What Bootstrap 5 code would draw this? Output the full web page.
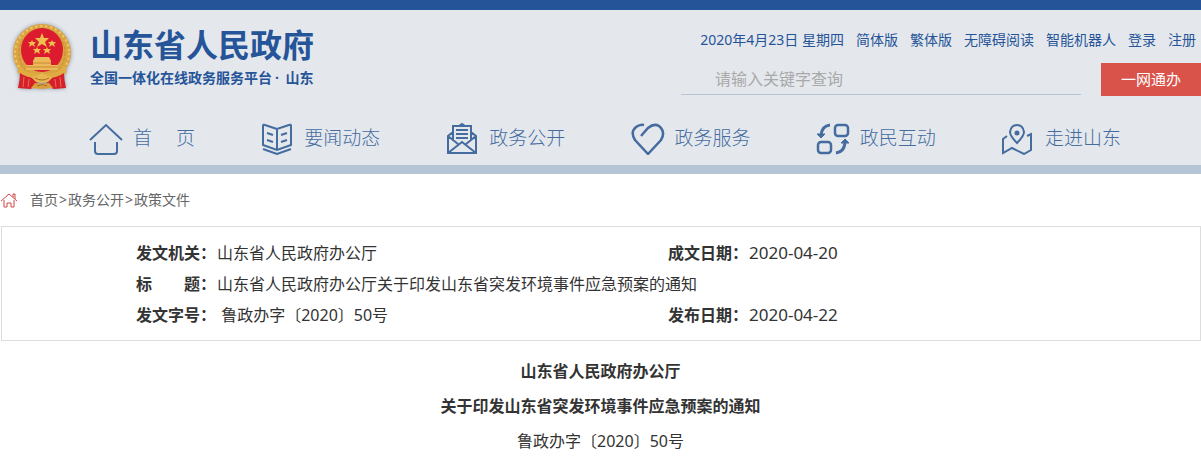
<!DOCTYPE html>
<html lang="zh-CN">
<head>
<meta charset="utf-8">
<meta name="viewport" content="width=device-width, initial-scale=1">
<title>山东省人民政府</title>
<link href="https://cdn.jsdelivr.net/npm/bootstrap@5.3.0/dist/css/bootstrap.min.css" rel="stylesheet">
<style>
body { font-family: "Noto Sans", "Noto Sans CJK SC", sans-serif; font-size: 16px; line-height: 24px; color: #333; background: #fff; }
a { color: inherit; text-decoration: none; }
.site-header { background: #e4e8ed; border-top: 10px solid #265498; border-bottom: 9px solid #b5c5d6; color: #265498; }
.emblem { width: 66px; height: 72px; flex: none; filter: drop-shadow(0 0 2px #8a93a3); }
.site-brand { padding: 10px 0 0 9px; gap: 15px; }
.site-title { font-size: 32px; line-height: 40px; font-weight: 700; margin: 5px 0 3px; }
.site-sub { font-size: 14px; line-height: 20px; font-weight: 700; }
.site-sub .dot { margin: 0 3px; }
.site-tools { width: 520px; }
.quick-links { font-size: 14px; line-height: 20px; padding: 20px 5px 0 0; gap: 12px; }
.search-row { margin-top: 13px; gap: 20px; }
.search-box { background: transparent; border: 0; border-bottom: 1px solid #b5c5d6; border-radius: 0; padding: 0 34px; height: 32px; font-size: 16px; }
.search-box:focus { background: transparent; box-shadow: none; }
.search-box::placeholder { color: #a9a9a9; }
.btn-service { background: #d9534a; color: #fff; width: 100px; height: 33px; flex: none; border: 0; border-radius: 0; font-size: 15px; line-height: 33px; padding: 0; }
.main-nav { padding: 24px 80px 9px 89px; font-size: 19px; line-height: 36px; font-weight: 300; color: #456c9f; }
.main-nav a { gap: 10px; }
.main-nav svg { width: 34px; height: 34px; fill: none; stroke: #456c9f; stroke-width: 2; }
.crumbs { font-size: 14px; line-height: 20px; color: #666; padding: 16px 0 16px 1px; gap: 13px; }
.crumbs svg { width: 16px; height: 16px; }
.crumbs .sep { margin: 0 1px; }
.doc-info { border: 1px solid #ddd; margin-left: 1px; padding: 11px 0 9px 134px; }
.doc-info td { padding: 3px 0 4px; line-height: 24px; text-align: left; }
.doc-info .doc-left { width: 50%; }
.doc-info b { margin-right: 1px; }
.doc-info time { font-size: 17px; }
.doc-head { padding-top: 13px; }
.doc-head h1, .doc-head p { font-size: 16px; line-height: 35px; margin: 0; }
.doc-head h1 { font-weight: 700; }
</style>
</head>
<body>
<header class="site-header">
  <div class="d-flex justify-content-between align-items-start">
    <a href="#" class="site-brand d-flex">
      <svg class="emblem" viewBox="0 0 66 72" aria-hidden="true">
        <ellipse cx="33" cy="33" rx="29" ry="29" fill="#d9a441"/>
        <ellipse cx="33" cy="33" rx="27" ry="27" fill="none" stroke="#f0cb6e" stroke-width="2" stroke-dasharray="2 3"/>
        <ellipse cx="33" cy="33" rx="23" ry="24" fill="none" stroke="#c48a2c" stroke-width="1" stroke-dasharray="3 2"/>
        <ellipse cx="33" cy="30" rx="21" ry="22" fill="#dc1c2e"/>
        <path d="m33 13 2 5h5l-4 4 2 5-5-3-5 3 2-5-4-4h5z" fill="#f0c04f"/>
        <g fill="#f0c04f">
          <path id="st" d="m23 20 1 2h3l-2 2 1 3-3-2-3 2 1-3-2-2h3z"/>
          <use href="#st" x="20"/><use href="#st" x="5" y="7"/><use href="#st" x="15" y="7"/>
        </g>
        <path d="M26 37h14l2 4H24zM24 41h18v4h7v5H17v-5h7z" fill="#edb958"/>
        <path d="M17 47h32M24 43h18" stroke="#c78b35" stroke-width="1"/>
        <path d="M11 46q6 8 22 8t22-8l3 6q-8 9-25 9T8 52z" fill="#e0ab43"/>
        <path d="M11 53q7 5 16 5l2 8-8 3-12-1q2-8 2-15zM55 53q-7 5-16 5l-2 8 8 3 12-1q-2-8-2-15z" fill="#d42028"/>
        <path d="m15 57-1 10M20 59l-1 8M51 57l1 10M46 59l1 8" stroke="#f06a58" stroke-width="1"/>
        <path d="m22 57 6-1 5-3 5 3 6 1-5 5-6 1-6-1z" fill="#e8b650"/>
        <path d="m22 68 4-5 7 1 7-1 4 5-11 1z" fill="#d9a03d"/>
        <path d="M26 58q7 4 14 0M28 66q5-3 10 0" fill="none" stroke="#a86c20" stroke-width="1"/>
      </svg>
      <span class="d-block">
        <span class="site-title d-block">山东省人民政府</span>
        <span class="site-sub d-block">全国一体化在线政务服务平台<span class="dot">·</span> 山东</span>
      </span>
    </a>
    <div class="site-tools">
      <div class="quick-links d-flex justify-content-end text-nowrap">
        <span>2020年4月23日 星期四</span>
        <a href="#">简体版</a><a href="#">繁体版</a><a href="#">无障碍阅读</a><a href="#">智能机器人</a><a href="#">登录</a><a href="#">注册</a>
      </div>
      <form class="search-row d-flex">
        <input type="text" class="search-box form-control" placeholder="请输入关键字查询" aria-label="请输入关键字查询">
        <button type="button" class="btn btn-service">一网通办</button>
      </form>
    </div>
  </div>
  <nav class="main-nav d-flex justify-content-between">
    <a href="#" class="d-flex align-items-center"><svg viewBox="0 0 34 34"><path d="M1 19 17 4l16 15" /><path d="M6 21v9q0 3 3 3h16q3 0 3-3v-9"/></svg><span>首　&nbsp;页</span></a>
    <a href="#" class="d-flex align-items-center"><svg viewBox="0 0 34 34"><path d="M17 8 5 4Q3 3 3 5v19l14 5 14-5V5q0-2-2-1zM17 8v21M3 28l14 5 14-5M7 12l6 2M7 19l6 2M27 12l-6 2M27 19l-6 2"/></svg><span>要闻动态</span></a>
    <a href="#" class="d-flex align-items-center"><svg viewBox="0 0 34 34"><path d="M8 11 3 15v17h28V15l-5-4M8 19V5h18v14M3 15l10 8M31 15l-10 8M3 32l14-11 14 11M14 5l3-2 3 2M11 9h12M11 13h12M11 17h12"/></svg><span>政务公开</span></a>
    <a href="#" class="d-flex align-items-center"><svg viewBox="0 0 34 34"><path d="m10 15 7-8q6-5 11-2 7 6 2 14L17 33 4 19Q-1 11 5 6q4-3 8-2" stroke-width="2.5"/></svg><span>政务服务</span></a>
    <a href="#" class="d-flex align-items-center"><svg viewBox="0 0 34 34"><rect x="19" y="4" width="13" height="11" rx="3" stroke-width="2.5"/><rect x="2" y="21" width="13" height="11" rx="3" stroke-width="2.5"/><path d="M14 4Q6 5 5 14M20 32q8-1 9-10" stroke-width="3"/><path d="M1 13h8l-4 4zM25 22h8l-4-4z" fill="#456c9f" stroke-width="1"/></svg><span>政民互动</span></a>
    <a href="#" class="d-flex align-items-center"><svg viewBox="0 0 34 34"><path d="M16 22q-7-7-7-11 1-7 7-7t7 7q0 4-7 11zM6 15l-4 3v14l9-5 12 6 7-4V13l-4 2"/><circle cx="16" cy="12" r="1.5" fill="#456c9f"/></svg><span>走进山东</span></a>
  </nav>
</header>
<main>
  <nav class="crumbs d-flex align-items-center" aria-label="breadcrumb">
    <svg viewBox="0 0 16 16" fill="none" stroke="#cf4545" stroke-width="1"><path d="m0 9 8-7 8 7M12 5V2h2v5M3 8v7h3v-4h4v4h3V8"/></svg>
    <span><a href="#">首页</a><span class="sep">&gt;</span><a href="#">政务公开</a><span class="sep">&gt;</span><a href="#">政策文件</a></span>
  </nav>
  <section class="doc-info">
    <table class="w-100">
      <tbody>
        <tr><td class="doc-left"><b>发文机关：</b>山东省人民政府办公厅</td><td><b>成文日期：</b><time>2020-04-20</time></td></tr>
        <tr><td colspan="2"><b>标　　题：</b>山东省人民政府办公厅关于印发山东省突发环境事件应急预案的通知</td></tr>
        <tr><td><b>发文字号：</b> 鲁政办字〔2020〕50号</td><td><b>发布日期：</b><time>2020-04-22</time></td></tr>
      </tbody>
    </table>
  </section>
  <article class="doc-head text-center">
    <h1>山东省人民政府办公厅<br>关于印发山东省突发环境事件应急预案的通知</h1>
    <p>鲁政办字〔2020〕50号</p>
  </article>
</main>
<script src="https://cdn.jsdelivr.net/npm/bootstrap@5.3.0/dist/js/bootstrap.bundle.min.js"></script>
</body>
</html>
